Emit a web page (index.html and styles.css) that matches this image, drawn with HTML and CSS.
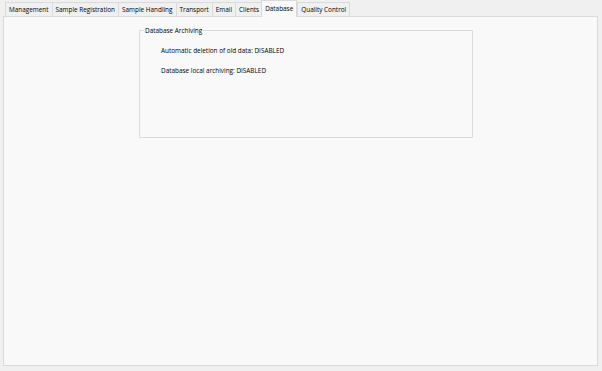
FILE: index.html
```html
<!DOCTYPE html>
<html>
<head>
<meta charset="utf-8">
<link rel="stylesheet" href="styles.css">
</head>
<body>
<div class="window">
  <div class="tabstrip">
    <div class="tab">Management</div>
    <div class="tab">Sample Registration</div>
    <div class="tab">Sample Handling</div>
    <div class="tab">Transport</div>
    <div class="tab">Email</div>
    <div class="tab">Clients</div>
    <div class="tab selected">Database</div>
    <div class="tab">Quality Control</div>
  </div>
  <div class="panel">
    <fieldset class="group">
      <legend>Database Archiving</legend>
      <div class="line">Automatic deletion of old data: DISABLED</div>
      <div class="line">Database local archiving: DISABLED</div>
    </fieldset>
  </div>
</div>
</body>
</html>
```
FILE: styles.css
```css
html, body {
  margin: 0;
  padding: 0;
  background: #f0f0f0;
  font-family: "Open Sans", "Noto Sans", sans-serif;
  font-size: 6.4px;
  color: #000;
}
.window {
  width: 602px;
  height: 371px;
  display: flex;
  flex-direction: column;
}
.tabstrip {
  display: flex;
  align-items: flex-end;
  height: 16px;
  padding-left: 5px;
  position: relative;
  z-index: 1;
}
.tab {
  height: 14px;
  line-height: 14px;
  padding: 0 3px;
  border: 1px solid #dadada;
  border-bottom: none;
  margin-right: -1px;
  background: #f0f0f0;
  box-sizing: border-box;
  white-space: nowrap;
}
.tab.selected {
  height: 17px;
  line-height: 15px;
  background: #f9f9f9;
  margin-left: -1px;
  margin-right: 0;
  margin-bottom: -1px;
  padding: 0 3px;
}
.panel {
  margin: 0 4px 5px 3px;
  height: 350px;
  box-sizing: border-box;
  border: 1px solid #dadada;
  background: #f9f9f9;
  padding: 9px 0 0 135px;
}
.group {
  margin: 0;
  width: 334px;
  height: 112px;
  box-sizing: border-box;
  border: 1px solid #dcdcdc;
  padding: 9px 0 0 4px;
}
.group legend {
  padding: 0 1px;
  margin-left: 0;
}
.line {
  height: 20px;
  line-height: 14px;
  padding-left: 17px;
}
```
